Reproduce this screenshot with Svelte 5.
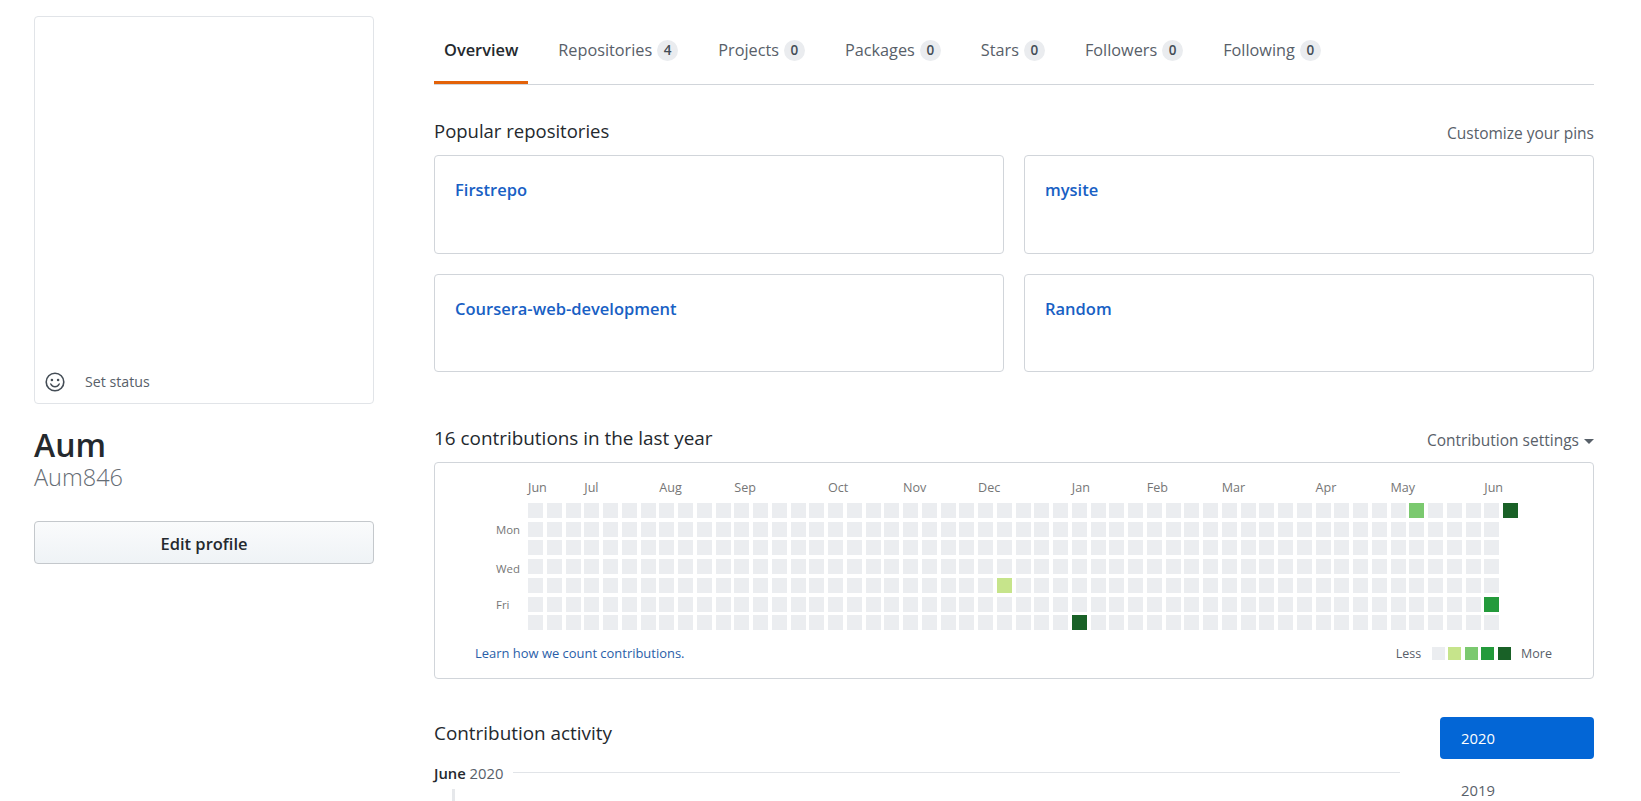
<script>
  const tabs = [
    { label: 'Repositories', count: 4 },
    { label: 'Projects', count: 0 },
    { label: 'Packages', count: 0 },
    { label: 'Stars', count: 0 },
    { label: 'Followers', count: 0 },
    { label: 'Following', count: 0 }
  ];
  const pins = ['Firstrepo', 'mysite', 'Coursera-web-development', 'Random'];
  const months = [
    ['Jun', 0], ['Jul', 3], ['Aug', 7], ['Sep', 11], ['Oct', 16], ['Nov', 20], ['Dec', 24],
    ['Jan', 29], ['Feb', 33], ['Mar', 37], ['Apr', 42], ['May', 46], ['Jun', 51]
  ];
  const levels = ['#ebedf0', '#c6e48b', '#7bc96f', '#239a3b', '#196127'];

  // cells with activity, keyed by column * 7 + row
  const active = { [47 * 7]: 2, [52 * 7]: 4, [51 * 7 + 5]: 3, [25 * 7 + 4]: 1, [29 * 7 + 6]: 4 };
  const days = Array.from({ length: 365 }, (_, i) => active[i] ?? 0);
</script>

<div class="page">
  <aside class="sidebar">
    <div class="avatar">
      <div class="status">
        <svg viewBox="0 0 20 20" width="20" height="20" aria-hidden="true">
          <circle cx="10" cy="10" r="8.8" fill="none" stroke="#444d56" stroke-width="1.6" />
          <circle cx="6.9" cy="8" r="1.3" fill="#444d56" />
          <circle cx="13.1" cy="8" r="1.3" fill="#444d56" />
          <path d="M5.8 12c1 1.9 2.5 2.8 4.2 2.8s3.2-.9 4.2-2.8" fill="none" stroke="#444d56" stroke-width="1.5" stroke-linecap="round" />
        </svg>
        <span>Set status</span>
      </div>
    </div>
    <h1 class="name">Aum</h1>
    <div class="login">Aum846</div>
    <button class="edit">Edit profile</button>
  </aside>

  <main class="main">
    <nav class="tabs">
      <a class="tab selected" href="#overview">Overview</a>
      {#each tabs as tab}
        <a class="tab" href="#tab">{tab.label}<span class="count">{tab.count}</span></a>
      {/each}
    </nav>

    <div class="head pins-head">
      <h2>Popular repositories</h2>
      <span class="side-link">Customize your pins</span>
    </div>
    <div class="pins">
      {#each pins as pin}
        <div class="pin"><a href="#repo">{pin}</a></div>
      {/each}
    </div>

    <div class="head contrib-head">
      <h2>16 contributions in the last year</h2>
      <span class="side-link">Contribution settings <i class="caret"></i></span>
    </div>
    <div class="calendar">
      <div class="months">
        {#each months as [name, col]}
          <span style="grid-column-start: {col + 1}">{name}</span>
        {/each}
      </div>
      <div class="weeks">
        <div class="weekdays">
          <span class="mon">Mon</span>
          <span class="wed">Wed</span>
          <span class="fri">Fri</span>
        </div>
        <div class="cells">
          {#each days as level}
            <div class="cell" style="background: {levels[level]}"></div>
          {/each}
        </div>
      </div>
      <div class="cal-foot">
        <a href="#learn">Learn how we count contributions.</a>
        <div class="legend">
          <span class="less">Less</span>
          {#each levels as colour}
            <div class="swatch" style="background: {colour}"></div>
          {/each}
          <span class="more">More</span>
        </div>
      </div>
    </div>

    <div class="activity">
      <div class="feed">
        <h2>Contribution activity</h2>
        <div class="month-row">
          <span class="month"><b>June</b> 2020</span>
          <div class="rule"></div>
        </div>
        <div class="timeline"></div>
      </div>
      <div class="years">
        <a class="year current" href="#2020">2020</a>
        <a class="year past" href="#2019">2019</a>
      </div>
    </div>
  </main>
</div>

<style>
  :global(body) {
    margin: 0;
    background: #fff;
  }

  .page {
    display: flex;
    height: 801px;
    overflow: hidden;
    font-family: "Open Sans", "Noto Sans", sans-serif;
    color: #24292e;
  }

  a {
    text-decoration: none;
  }

  .sidebar {
    width: 340px;
    flex: 0 0 auto;
    margin: 16px 0 0 34px;
  }

  .avatar {
    box-sizing: border-box;
    height: 388px;
    border: 1px solid #e1e4e8;
    border-radius: 4px;
    display: flex;
    flex-direction: column;
    justify-content: flex-end;
  }

  .status {
    height: 43px;
    display: flex;
    align-items: center;
    padding-left: 10px;
    font-size: 14.2px;
    color: #586069;
  }

  .status span {
    margin-left: 20px;
  }

  .name {
    margin: 23px 0 0;
    font-size: 32px;
    line-height: 36px;
    font-weight: 600;
  }

  .login {
    font-size: 23.5px;
    line-height: 28px;
    font-weight: 300;
    color: #666d75;
  }

  .edit {
    display: block;
    width: 100%;
    height: 43px;
    margin-top: 30px;
    padding-top: 2px;
    border: 1px solid #c4c8cc;
    border-radius: 4px;
    background: linear-gradient(#fafbfc, #eff3f6);
    font: 600 16.5px "Open Sans", sans-serif;
    color: #24292e;
  }

  .main {
    width: 1160px;
    flex: 0 0 auto;
    margin-left: 60px;
  }

  .tabs {
    display: flex;
    gap: 20px;
    height: 85px;
    box-sizing: border-box;
    border-bottom: 1px solid #d1d5da;
  }

  .tab {
    box-sizing: border-box;
    height: 84px;
    padding: 38px 10px 0;
    font-size: 16.25px;
    line-height: 24px;
    color: #586069;
    display: flex;
    align-items: flex-start;
  }

  .tab.selected {
    font-size: 16.4px;
    font-weight: 600;
    color: #24292e;
    border-bottom: 3px solid #e36209;
  }

  .count {
    box-sizing: border-box;
    width: 21px;
    height: 21px;
    margin-left: 5px;
    margin-top: 2px;
    border-radius: 50%;
    background: #eaecef;
    font-size: 13.5px;
    font-weight: 600;
    line-height: 21px;
    text-align: center;
    color: #444d56;
  }

  .head {
    display: flex;
    justify-content: space-between;
    align-items: flex-start;
    height: 24px;
    margin-bottom: 12px;
  }

  .pins-head {
    margin-top: 34px;
  }

  .pins-head h2 {
    font-size: 18.5px;
  }

  .contrib-head {
    margin-top: 54px;
  }

  h2 {
    margin: 0;
    font-size: 18.9px;
    line-height: 24px;
    font-weight: 400;
    color: #24292e;
  }

  .side-link {
    margin-top: 2px;
    font-size: 15.5px;
    line-height: 24px;
    color: #586069;
  }

  .caret {
    display: inline-block;
    margin-left: 1px;
    vertical-align: 2px;
    border: 5px solid transparent;
    border-top-color: #586069;
    border-bottom: 0;
  }

  .pins {
    display: grid;
    grid-template-columns: 570px 570px;
    gap: 20px;
  }

  .pin {
    box-sizing: border-box;
    height: 98.5px;
    padding: 22px 20px 0;
    border: 1px solid #d1d5da;
    border-radius: 4px;
    font-size: 16.5px;
    line-height: 24px;
    font-weight: 600;
  }

  .pin a {
    color: #1860c4;
  }

  .calendar {
    box-sizing: border-box;
    height: 217px;
    padding: 16px 41px 0 61px;
    border: 1px solid #d1d5da;
    border-radius: 4px;
  }

  .months {
    display: grid;
    grid-template-columns: repeat(53, 15px);
    column-gap: 3.75px;
    margin: 0 0 6px 32px;
    height: 18px;
    font-size: 12.6px;
    line-height: 18px;
    color: #767676;
    white-space: nowrap;
  }

  .weeks {
    display: flex;
  }

  .weekdays {
    width: 32px;
    display: grid;
    grid-template-rows: repeat(7, 15px);
    row-gap: 3.74px;
    font-size: 11.4px;
    line-height: 15px;
    color: #767676;
  }

  .mon {
    grid-row: 2;
  }

  .wed {
    grid-row: 4;
    margin-top: 2px;
  }

  .fri {
    grid-row: 6;
  }

  .cells {
    display: grid;
    grid-auto-flow: column;
    grid-template-rows: repeat(7, 15px);
    grid-auto-columns: 15px;
    column-gap: 3.75px;
    row-gap: 3.74px;
  }

  .cal-foot {
    display: flex;
    justify-content: space-between;
    align-items: center;
    height: 20px;
    margin: 13px 0 0 -21px;
    font-size: 12.5px;
    color: #586069;
  }

  .cal-foot a {
    font-size: 12.95px;
    color: #2a5ea8;
  }

  .legend {
    display: flex;
    align-items: center;
    gap: 3.5px;
  }

  .swatch {
    width: 13px;
    height: 13px;
  }

  .less {
    margin-right: 7px;
  }

  .more {
    margin-left: 7px;
  }

  .activity {
    display: flex;
    justify-content: space-between;
    margin-top: 38px;
  }

  .feed {
    width: 966px;
    padding-top: 4px;
  }

  .month-row {
    display: flex;
    align-items: center;
    gap: 10px;
    margin-top: 18px;
    height: 20px;
  }

  .month {
    font-size: 14.8px;
    line-height: 20px;
    color: #586069;
    white-space: nowrap;
  }

  .month b {
    font-weight: 600;
    color: #24292e;
  }

  .rule {
    flex: 1;
    height: 1px;
    margin-top: -2px;
    background: #e1e4e8;
  }

  .timeline {
    width: 3px;
    height: 40px;
    margin: 6px 0 0 18px;
    background: #e6e8eb;
  }

  .years {
    width: 154px;
  }

  .year {
    display: block;
    padding-left: 21px;
    font-size: 14.8px;
    color: #586069;
  }

  .year.current {
    height: 42px;
    line-height: 42px;
    border-radius: 4px;
    background: #0366d6;
    color: #fff;
  }

  .year.past {
    margin-top: 20px;
    height: 22px;
    line-height: 22px;
  }
</style>
